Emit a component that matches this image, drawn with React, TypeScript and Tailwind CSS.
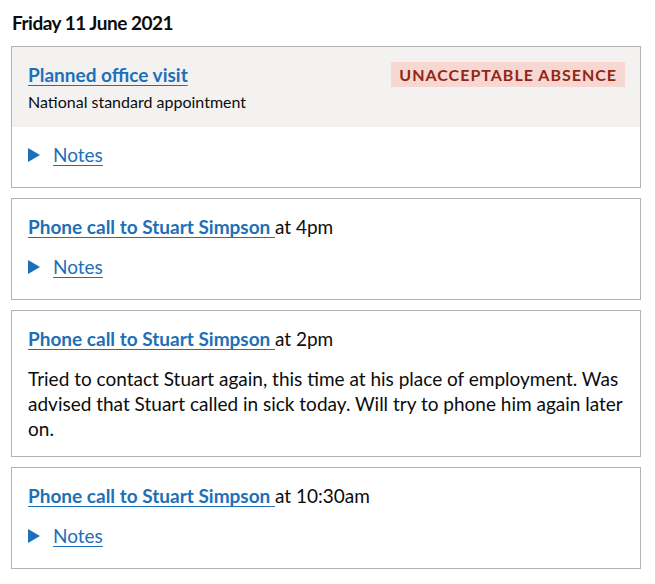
import React from "react";

const FONT = { fontFamily: 'Lato, "Liberation Sans", Arial, sans-serif' };

type Entry = {
  id: number;
  title: string;
  time?: string;
  notes?: string;
  hasDetails?: boolean;
};

const entries: Entry[] = [
  { id: 1, title: "Phone call to Stuart Simpson", time: "4pm", hasDetails: true },
  {
    id: 2,
    title: "Phone call to Stuart Simpson",
    time: "2pm",
    notes:
      "Tried to contact Stuart again, this time at his place of employment. Was advised that Stuart called in sick today. Will try to phone him again later on.",
  },
  { id: 3, title: "Phone call to Stuart Simpson", time: "10:30am", hasDetails: true },
];

const NotesToggle: React.FC = () => (
  <div className="flex items-center h-[25px] text-[19px] leading-[25px]">
    <svg width="12" height="14" viewBox="0 0 12 14" className="shrink-0">
      <polygon points="0,0 12,7 0,14" fill="#1d70b8" />
    </svg>
    <a
      href="#"
      className="ml-[13px] text-[#1d70b8] underline decoration-1 underline-offset-[3px]"
    >
      Notes
    </a>
  </div>
);

const TitleLink: React.FC<{ children: React.ReactNode }> = ({ children }) => (
  <a
    href="#"
    className="font-bold text-[#1d70b8] underline decoration-1 underline-offset-[3px]"
  >
    {children}{" "}
  </a>
);

export default function App() {
  return (
    <div className="min-h-screen bg-white text-[#0b0c0c]" style={FONT}>
      <div className="w-[630px] ml-[11px] pt-[10px] pb-4">
        <h2 className="text-[19px] leading-[25px] font-bold tracking-[-0.5px] mb-[11px] pl-px">
          Friday 11 June 2021
        </h2>

        {/* Planned appointment */}
        <div className="border border-[#b1b4b6] mb-[10px]">
          <div className="bg-[#f3f2f1] px-[16px] pt-[15px] pb-[15px] flex justify-between items-start">
            <div>
              <div className="text-[19px] leading-[25px]">
                <a
                  href="#"
                  className="font-bold text-[#1d70b8] underline decoration-1 underline-offset-[3px]"
                >
                  Planned office visit
                </a>
              </div>
              <p className="text-[16px] leading-[20px] mt-[5px]">
                National standard appointment
              </p>
            </div>
            <strong className="bg-[#f6d7d2] text-[#942514] text-[16px] leading-[25px] font-bold uppercase tracking-[1px] px-[8px] mr-[-1px]">
              Unacceptable absence
            </strong>
          </div>
          <div className="px-[16px] pt-[15px] pb-[20px]">
            <NotesToggle />
          </div>
        </div>

        {entries.map((e) => (
          <div key={e.id} className="border border-[#b1b4b6] mb-[10px] px-[16px] pt-[15px]">
            <div className="text-[19px] leading-[25px]">
              <TitleLink>{e.title}</TitleLink>
              at {e.time}
            </div>
            {e.hasDetails && (
              <div className="pt-[15px] pb-[20px]">
                <NotesToggle />
              </div>
            )}
            {e.notes && (
              <p className="text-[19px] leading-[25px] pt-[15px] pb-[15px]">
                {e.notes}
              </p>
            )}
          </div>
        ))}
      </div>
    </div>
  );
}
